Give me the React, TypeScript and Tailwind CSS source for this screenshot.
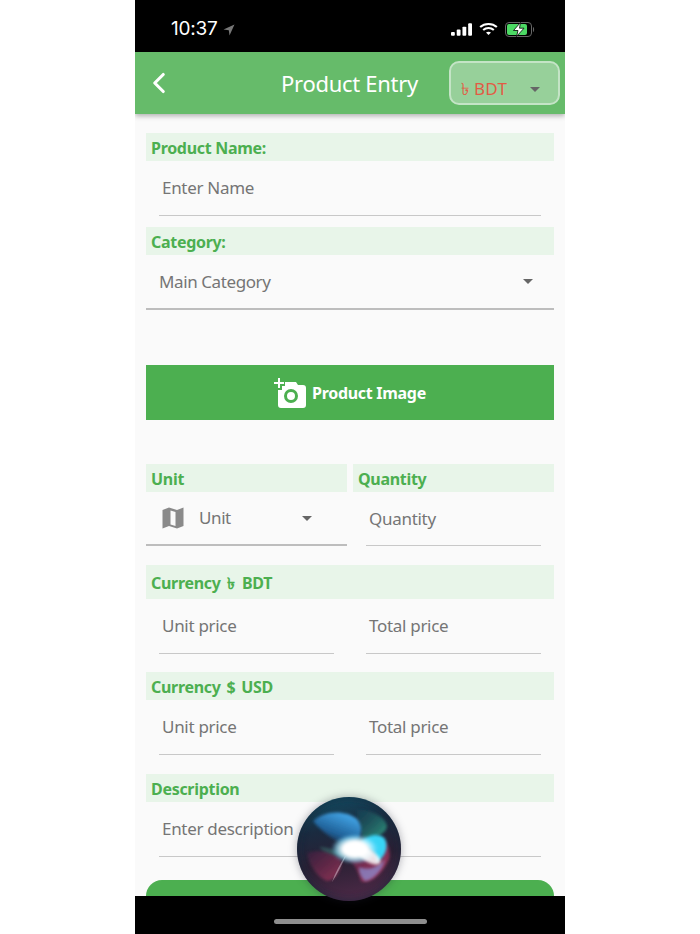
import { ChevronLeft } from "lucide-react";

const font = "font-['Noto_Sans','DejaVu_Sans',sans-serif]";

function Label({ text, className = "h-[28px]" }: { text: string; className?: string }) {
  return (
    <div className={`flex items-center bg-[#e8f5e9] pl-[5px] pt-[1px] text-[16px] font-bold tracking-[-0.3px] text-[#4caf50] ${className}`}>
      {text}
    </div>
  );
}

function Caret({ className = "" }: { className?: string }) {
  return <div className={`h-0 w-0 border-x-[5px] border-t-[5px] border-x-transparent border-t-[#666] ${className}`} />;
}

function Field({ text, className = "h-[55px]" }: { text: string; className?: string }) {
  return (
    <div className={`flex items-center border-b border-[#c8c8c8] pl-[3px] text-[17px] tracking-[-0.3px] text-[#757575] ${className}`}>
      {text}
    </div>
  );
}

function PriceRow() {
  return (
    <div className="flex px-[13px]">
      <Field text="Unit price" className="h-[55px] w-[175px]" />
      <Field text="Total price" className="ml-[32px] h-[55px] w-[175px]" />
    </div>
  );
}

function SiriOrb() {
  return (
    <svg viewBox="0 0 104 104" className="absolute left-[162px] top-[797px] h-[104px] w-[104px] drop-shadow-[0_0_4px_rgba(30,30,50,0.35)]">
      <defs>
        <linearGradient id="orb" x1="0.4" y1="0" x2="0.6" y2="1">
          <stop offset="0%" stopColor="#134a60" />
          <stop offset="28%" stopColor="#1a2b40" />
          <stop offset="60%" stopColor="#2a2034" />
          <stop offset="100%" stopColor="#4f2a48" />
        </linearGradient>
        <linearGradient id="blue" x1="0.7" y1="0.1" x2="0.2" y2="1">
          <stop offset="0%" stopColor="#3f9fe0" />
          <stop offset="55%" stopColor="#1f5f96" />
          <stop offset="100%" stopColor="#16304c" stopOpacity="0" />
        </linearGradient>
        <linearGradient id="teal" x1="0" y1="0" x2="1" y2="1">
          <stop offset="0%" stopColor="#15465a" stopOpacity="0.4" />
          <stop offset="100%" stopColor="#2f9a80" />
        </linearGradient>
        <linearGradient id="pink" x1="0" y1="0" x2="1" y2="1">
          <stop offset="0%" stopColor="#3b2040" />
          <stop offset="100%" stopColor="#b0385f" />
        </linearGradient>
        <radialGradient id="core" cx="50%" cy="50%" r="50%">
          <stop offset="0%" stopColor="#ffffff" />
          <stop offset="50%" stopColor="#ffffff" />
          <stop offset="75%" stopColor="#a6ecff" stopOpacity="0.7" />
          <stop offset="100%" stopColor="#5fd4ff" stopOpacity="0" />
        </radialGradient>
        <filter id="soft" x="-20%" y="-20%" width="140%" height="140%">
          <feGaussianBlur stdDeviation="1.8" />
        </filter>
        <filter id="softer" x="-30%" y="-30%" width="160%" height="160%">
          <feGaussianBlur stdDeviation="3" />
        </filter>
        <clipPath id="ball">
          <circle cx="52" cy="52" r="52" />
        </clipPath>
      </defs>
      <circle cx="52" cy="52" r="52" fill="url(#orb)" />
      <g clipPath="url(#ball)">
        <path d="M60 13 C74 12 90 20 90 30 C88 38 76 42 66 41 C62 32 60 22 60 13 Z" fill="url(#teal)" filter="url(#soft)" />
        <path d="M16 24 C26 14 48 12 60 22 C68 32 64 44 52 50 C40 46 26 36 16 24 Z" fill="url(#blue)" filter="url(#soft)" />
        <path d="M10 56 C22 52 34 54 44 62 C46 72 38 84 30 84 C20 80 12 68 10 56 Z" fill="url(#pink)" opacity="0.7" filter="url(#soft)" />
        <path d="M22 50 C32 50 42 54 48 58 C38 60 28 56 22 50 Z" fill="#3f7f78" opacity="0.5" filter="url(#soft)" />
        <path d="M46 60 C54 62 60 70 64 84 C70 88 84 80 92 62 C94 54 90 46 88 44 C78 62 62 64 46 60 Z" fill="url(#pink)" filter="url(#soft)" />
        <path d="M62 70 C72 74 82 70 88 62 C86 72 78 82 68 84 C64 80 62 76 62 70 Z" fill="#8a93d8" opacity="0.7" filter="url(#soft)" />
        <path d="M62 46 C72 36 84 36 88 42 C92 50 88 60 80 65 C78 56 72 50 62 46 Z" fill="#38d4f5" filter="url(#soft)" />
        <path d="M35 85 C38 76 43 67 48 59 L48.8 59.5 C44.5 68 40 78 35 85 Z" fill="#e6d8e4" opacity="0.45" />
        <ellipse cx="58" cy="52" rx="24" ry="15" fill="url(#core)" filter="url(#soft)" />
        <ellipse cx="72" cy="59" rx="13" ry="6" fill="#ffffff" opacity="0.85" transform="rotate(32 72 59)" filter="url(#soft)" />
        <circle cx="52" cy="52" r="52" fill="none" stroke="#12283a" strokeWidth="6" opacity="0.5" filter="url(#softer)" />
      </g>
    </svg>
  );
}

export default function App() {
  return (
    <div className={`flex min-h-[934px] justify-center bg-white ${font}`}>
      <div className="relative flex h-[934px] w-[430px] flex-col overflow-hidden bg-[#fafafa]">
        <div className="flex h-[52px] shrink-0 items-center justify-between bg-black pl-[36px] pr-[29px] pt-[6px] text-white">
          <div className="flex items-center gap-[5px] text-[19px] font-['Inter',sans-serif] tracking-[-0.2px]">
            10:37
            <svg viewBox="0 0 12 12" className="mt-[2px] h-[12px] w-[12px]">
              <path d="M11.5 0.5 L0.5 5.5 L5.8 6.2 L6.5 11.5 Z" fill="#777" />
            </svg>
          </div>
          <div className="flex items-center gap-[7px]">
            <svg viewBox="0 0 22 13" className="h-[13px] w-[21px]" fill="#fff">
              <rect x="0" y="9" width="4" height="4" rx="1" />
              <rect x="6" y="6.5" width="4" height="6.5" rx="1" />
              <rect x="12" y="3.5" width="4" height="9.5" rx="1" />
              <rect x="18" y="0" width="4" height="13" rx="1" />
            </svg>
            <svg viewBox="0 0 20 14" className="h-[14px] w-[19px]" fill="none" stroke="#fff" strokeWidth="2.2">
              <path d="M1.2 5 C6 0.6 14 0.6 18.8 5" />
              <path d="M4.4 8 C7.6 5.2 12.4 5.2 15.6 8" />
              <path d="M10 13.4 L7.4 10.6 C8.8 9.5 11.2 9.5 12.6 10.6 Z" fill="#fff" stroke="none" />
            </svg>
            <svg viewBox="0 0 31 15" className="h-[15px] w-[31px]">
              <rect x="0.5" y="0.5" width="26" height="14" rx="3.5" fill="none" stroke="#666" />
              <rect x="2" y="2" width="20" height="11" rx="2" fill="#4cd964" />
              <path d="M28 5 C29.5 5.5 29.5 9.5 28 10 Z" fill="#666" />
              <path d="M15.5 0.5 L8.5 8.5 H13 L11.5 14.5 L19 6.2 H14.5 Z" fill="#fff" stroke="#000" strokeWidth="0.8" />
            </svg>
          </div>
        </div>

        <div className="relative z-10 flex h-[62px] shrink-0 items-center bg-[#66bb6a] pl-[7px] pr-[5px] shadow-[0_2px_5px_rgba(0,0,0,0.3)]">
          <ChevronLeft className="h-[34px] w-[34px] text-white" strokeWidth={2.2} />
          <div className="ml-[104px] w-[139px] whitespace-nowrap text-center text-[22px] tracking-[-0.3px] text-white">Product Entry</div>
          <div className="ml-auto flex h-[44px] w-[111px] items-end rounded-[10px] border-2 border-[#c4e4c6] bg-[#97d09a] pb-[2px] pl-[10px] pr-[18px]">
            <span className="text-[17px] leading-[24px] tracking-[0.3px] text-[#e25b45]">৳ BDT</span>
            <Caret className="mb-[9px] ml-auto" />
          </div>
        </div>

        <div className="flex flex-1 flex-col px-[11px] pt-[19px]">
          <Label text="Product Name:" />
          <div className="px-[13px]">
            <Field text="Enter Name" />
          </div>
          <Label text="Category:" className="mt-[11px] h-[28px]" />
          <div className="flex h-[55px] items-center border-b-2 border-[#bdbdbd] pl-[13px] pr-[21px] text-[17px] tracking-[-0.4px] text-[#757575]">
            Main Category
            <Caret className="ml-auto" />
          </div>

          <div className="mt-[55px] flex h-[55px] items-center justify-center gap-[6px] bg-[#4caf50] text-[16px] font-bold tracking-[-0.3px] text-white">
            <svg viewBox="0 0 32 30" className="h-[30px] w-[32px]" fill="#fff">
              <path d="M4 0 h2 v4 h4 v2 h-4 v4 h-2 v-4 h-4 v-2 h4 Z" />
              <path fillRule="evenodd" d="M11 4 H22 L24 7 H29 Q32 7 32 10 V27 Q32 30 29 30 H7 Q4 30 4 27 V12 H8 V8 H11 Z M17 11 A7 7 0 1 0 17 25 A7 7 0 1 0 17 11 Z M17 14 A4 4 0 1 1 17 22 A4 4 0 1 1 17 14 Z" />
            </svg>
            Product Image
          </div>

          <div className="mt-[44px] flex gap-[6px]">
            <Label text="Unit" className="h-[28px] w-[201px]" />
            <Label text="Quantity" className="h-[28px] w-[201px]" />
          </div>
          <div className="flex gap-[6px]">
            <div className="flex h-[54px] w-[201px] items-center border-b-2 border-[#bdbdbd] pl-[16px] pr-[35px] text-[17px] tracking-[-0.4px] text-[#757575]">
              <svg viewBox="0 0 22 22" className="h-[22px] w-[22px]" fill="#8a8a8a">
                <path fillRule="evenodd" d="M0.5 3 L7 0.5 L15 3 L21.5 0.5 V19 L15 21.5 L7 19 L0.5 21.5 Z M8.5 3.5 V17.5 L13.5 19 V5 Z" />
              </svg>
              <span className="ml-[15px]">Unit</span>
              <Caret className="ml-auto" />
            </div>
            <div className="w-[201px] px-[13px]">
              <Field text="Quantity" className="h-[54px]" />
            </div>
          </div>

          <Label text="Currency ৳ BDT" className="mt-[19px] h-[34px] [word-spacing:3px]" />
          <PriceRow />
          <Label text="Currency $ USD" className="mt-[18px] h-[28px] [word-spacing:2px]" />
          <PriceRow />
          <Label text="Description" className="mt-[19px] h-[28px]" />
          <div className="px-[13px]">
            <Field text="Enter description" />
          </div>
          <div className="mt-[23px] h-[16px] rounded-t-[16px] bg-[#4caf50]" />
        </div>

        <div className="flex h-[38px] shrink-0 items-start justify-center bg-black pt-[23px]">
          <div className="h-[5px] w-[153px] rounded-full bg-[#8e8e8e]" />
        </div>

        <SiriOrb />
      </div>
    </div>
  );
}
